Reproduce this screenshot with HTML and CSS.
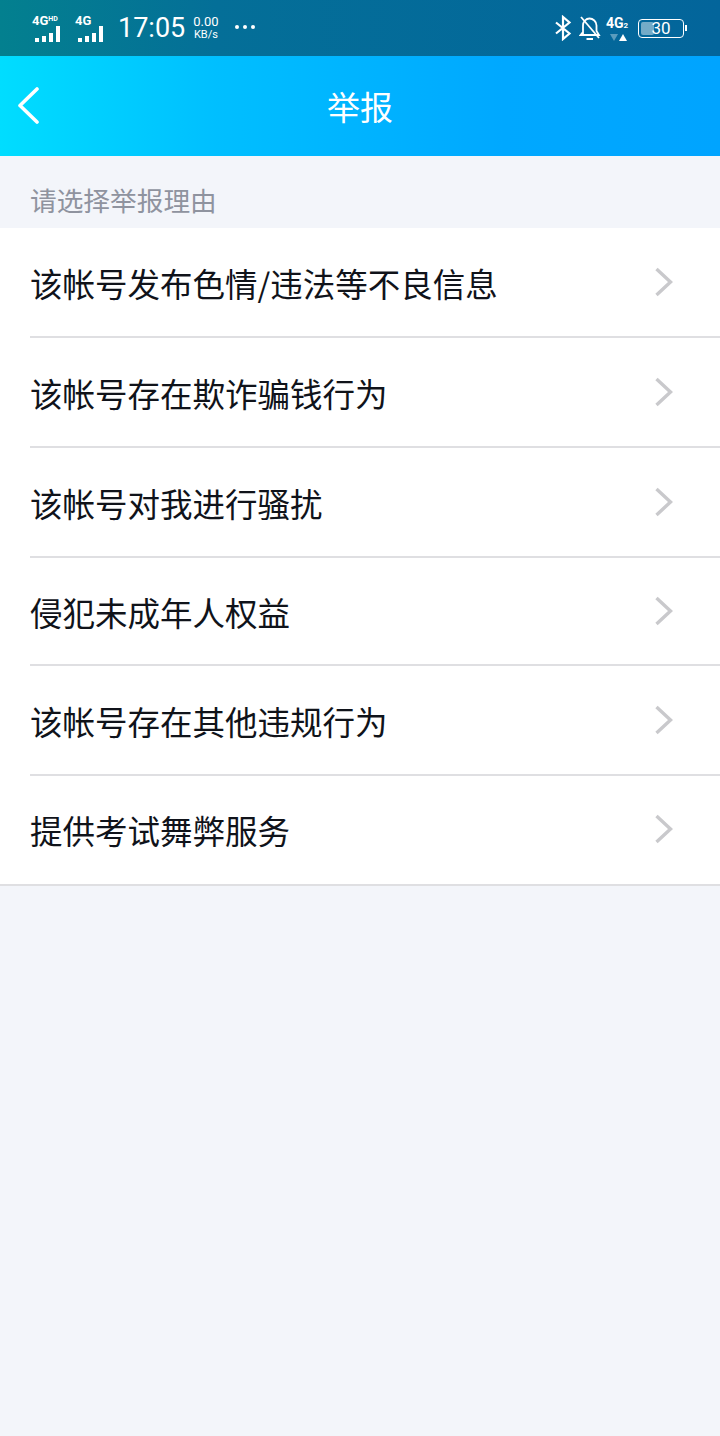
FILE: index.html
```html
<!DOCTYPE html>
<html>
  <head>
    <meta charset="utf-8">
    <title>举报</title>
    <link rel="stylesheet" href="styles.css">
  </head>
  <body>
    <!-- 状态栏 -->
    <div class="status-bar">
      <div class="status-left">
        <div class="signal signal-hd">
          <div class="net">4G<span class="net-sup">HD</span></div>
          <div class="bars"><i class="b1"></i><i class="b2"></i><i class="b3"></i><i class="b4"></i></div>
        </div>
        <div class="signal">
          <div class="net">4G</div>
          <div class="bars"><i class="b1"></i><i class="b2"></i><i class="b3"></i><i class="b4"></i></div>
        </div>
        <span class="clock">17:05</span>
        <div class="speed"><span class="speed-num">0.00</span><span>KB/s</span></div>
        <div class="dots"><i></i><i></i><i></i></div>
      </div>
      <div class="status-right">
        <svg class="icon-bt" width="18" height="26" viewBox="0 0 18 26">
          <path d="M2 7.5 15.5 18.5 9 24V2l6.5 5.500L2 18.500" fill="none" stroke="#fff" stroke-width="2.200"/>
        </svg>
        <svg class="icon-bell" width="22" height="26" viewBox="0 0 22 26">
          <path d="M4 19V10.500C4 6.500 7 3.500 10.500 3.500S17.500 6.500 17.500 10.500V16L20 20H1.500L4 17" fill="none" stroke="#fff" stroke-width="1.800"/>
          <path d="M2 2 20 23" stroke="#fff" stroke-width="1.800"/>
          <path d="M7.500 24H14" stroke="#fff" stroke-width="2"/>
        </svg>
        <div class="data">
          <div class="data-net">4G<span class="data-sub">2</span></div>
          <svg class="data-arrows" width="22" height="7" viewBox="0 0 22 7">
            <path d="M1 0H9L5 7Z" fill="#fff" opacity=".35"/>
            <path d="M10 7H18L14 0Z" fill="#fff"/>
          </svg>
        </div>
        <div class="battery">
          <div class="battery-box">
            <div class="battery-fill"></div>
            <span class="battery-num">30</span>
          </div>
          <div class="battery-cap"></div>
        </div>
      </div>
    </div>

    <!-- 标题栏 -->
    <div class="title-bar">
      <svg class="back" width="24" height="38" viewBox="0 0 24 38">
        <path d="M21 3 4 19.500 21 36" fill="none" stroke="#fff" stroke-width="3.600" stroke-linecap="round" stroke-linejoin="round"/>
      </svg>
      <span class="title">举报</span>
    </div>

    <div class="section-title">请选择举报理由</div>

    <ul class="reason-list">
      <li class="reason"><span>该帐号发布色情/违法等不良信息</span><svg class="arrow" width="20" height="32" viewBox="0 0 20 32"><path d="M2.500 3 16.500 16 2.500 29" fill="none" stroke="#c9c9cc" stroke-width="3.400"/></svg></li>
      <li class="reason"><span>该帐号存在欺诈骗钱行为</span><svg class="arrow" width="20" height="32" viewBox="0 0 20 32"><path d="M2.500 3 16.500 16 2.500 29" fill="none" stroke="#c9c9cc" stroke-width="3.400"/></svg></li>
      <li class="reason"><span>该帐号对我进行骚扰</span><svg class="arrow" width="20" height="32" viewBox="0 0 20 32"><path d="M2.500 3 16.500 16 2.500 29" fill="none" stroke="#c9c9cc" stroke-width="3.400"/></svg></li>
      <li class="reason reason-short"><span>侵犯未成年人权益</span><svg class="arrow" width="20" height="32" viewBox="0 0 20 32"><path d="M2.500 3 16.500 16 2.500 29" fill="none" stroke="#c9c9cc" stroke-width="3.400"/></svg></li>
      <li class="reason"><span>该帐号存在其他违规行为</span><svg class="arrow" width="20" height="32" viewBox="0 0 20 32"><path d="M2.500 3 16.500 16 2.500 29" fill="none" stroke="#c9c9cc" stroke-width="3.400"/></svg></li>
      <li class="reason"><span>提供考试舞弊服务</span><svg class="arrow" width="20" height="32" viewBox="0 0 20 32"><path d="M2.500 3 16.500 16 2.500 29" fill="none" stroke="#c9c9cc" stroke-width="3.400"/></svg></li>
    </ul>
  </body>
</html>
```

FILE: styles.css
```css
* {
  box-sizing: border-box;
}

html, body {
  margin: 0;
  padding: 0;
}

body {
  width: 720px;
  height: 1436px;
  overflow: hidden;
  background-color: #f3f5fa;
  font-family: "Noto Sans CJK SC", "Noto Sans", sans-serif;
}

/* 状态栏 */
.status-bar {
  display: flex;
  justify-content: space-between;
  align-items: center;
  height: 56px;
  padding: 0 33px 0 32px;
  color: #fff;
  background: linear-gradient(90deg, #03808f 0%, #046f98 30%, #03659b 100%);
  font-family: Roboto, "Liberation Sans", sans-serif;
}

.status-left,
.status-right {
  display: flex;
  align-items: center;
}

.signal {
  display: flex;
  flex-direction: column;
  width: 34px;
  margin-right: 8px;
}

.signal-hd {
  width: 35px;
}

.net {
  display: flex;
  align-items: flex-start;
  height: 14px;
  font-size: 13px;
  line-height: 14px;
  font-weight: 700;
}

.net-sup {
  font-size: 7px;
  line-height: 10px;
}

.bars {
  display: flex;
  align-items: flex-end;
  gap: 3px;
  height: 14px;
  padding-left: 3px;
}

.bars i {
  display: block;
  width: 4px;
  background-color: #fff;
}

.bars .b1 { height: 4px; }
.bars .b2 { height: 6px; }
.bars .b3 { height: 9px; }
.bars .b4 { height: 16px; }

.clock {
  margin-left: 1px;
  font-size: 27px;
  line-height: 32px;
}

.speed {
  display: flex;
  flex-direction: column;
  align-items: center;
  margin-left: 8px;
  font-size: 11px;
  line-height: 12px;
}

.speed-num {
  font-size: 13px;
  line-height: 14px;
}

.dots {
  display: flex;
  gap: 4px;
  margin: 0 0 2px 16px;
}

.dots i {
  display: block;
  width: 4px;
  height: 4px;
  border-radius: 50%;
  background-color: #fff;
}

.icon-bt {
  margin-right: 7px;
}

.icon-bell {
  margin-right: 5px;
}

.data {
  display: flex;
  flex-direction: column;
  width: 26px;
  margin-right: 6px;
}

.data-net {
  font-size: 14px;
  line-height: 15px;
  font-weight: 700;
}

.data-sub {
  font-size: 8px;
}

.data-arrows {
  display: block;
  margin: 1px 0 0 3px;
}

.battery {
  display: flex;
  align-items: center;
}

.battery-box {
  position: relative;
  width: 46px;
  height: 19px;
  border: 1px solid #fff;
  border-radius: 4px;
  text-align: center;
  font-size: 17px;
  line-height: 17px;
}

.battery-fill {
  position: absolute;
  left: 2px;
  top: 2px;
  bottom: 2px;
  width: 13px;
  border-radius: 2px;
  background-color: rgba(255, 255, 255, .45);
}

.battery-num {
  position: relative;
}

.battery-cap {
  width: 2px;
  height: 6px;
  margin-left: 1px;
  background-color: #fff;
}

/* 标题栏 */
.title-bar {
  position: relative;
  display: flex;
  justify-content: center;
  align-items: center;
  height: 100px;
  background: linear-gradient(90deg, #00ddff 0%, #00bfff 30%, #00a8ff 70%, #00a4ff 100%);
}

.back {
  position: absolute;
  left: 16px;
  top: 30px;
}

.title {
  color: #fff;
  font-size: 33px;
  line-height: 44px;
}

/* 理由列表 */
.section-title {
  height: 72px;
  padding: 26px 30px 0;
  color: #8f939f;
  font-size: 26.700px;
  line-height: 36px;
}

.reason-list {
  margin: 0;
  padding: 0;
  list-style: none;
  background-color: #fff;
  border-bottom: 2px solid #dfdfe2;
}

.reason {
  position: relative;
  display: flex;
  justify-content: space-between;
  align-items: center;
  height: 110px;
  padding: 0 46px 2px 30px;
  color: #10131a;
  font-size: 32.500px;
}

.reason-short {
  height: 108px;
}

.reason::after {
  content: "";
  position: absolute;
  left: 30px;
  right: 0;
  bottom: 0;
  height: 2px;
  background-color: #dfdfe2;
}

.reason:last-child {
  height: 108px;
}

.reason:last-child::after {
  display: none;
}
```
